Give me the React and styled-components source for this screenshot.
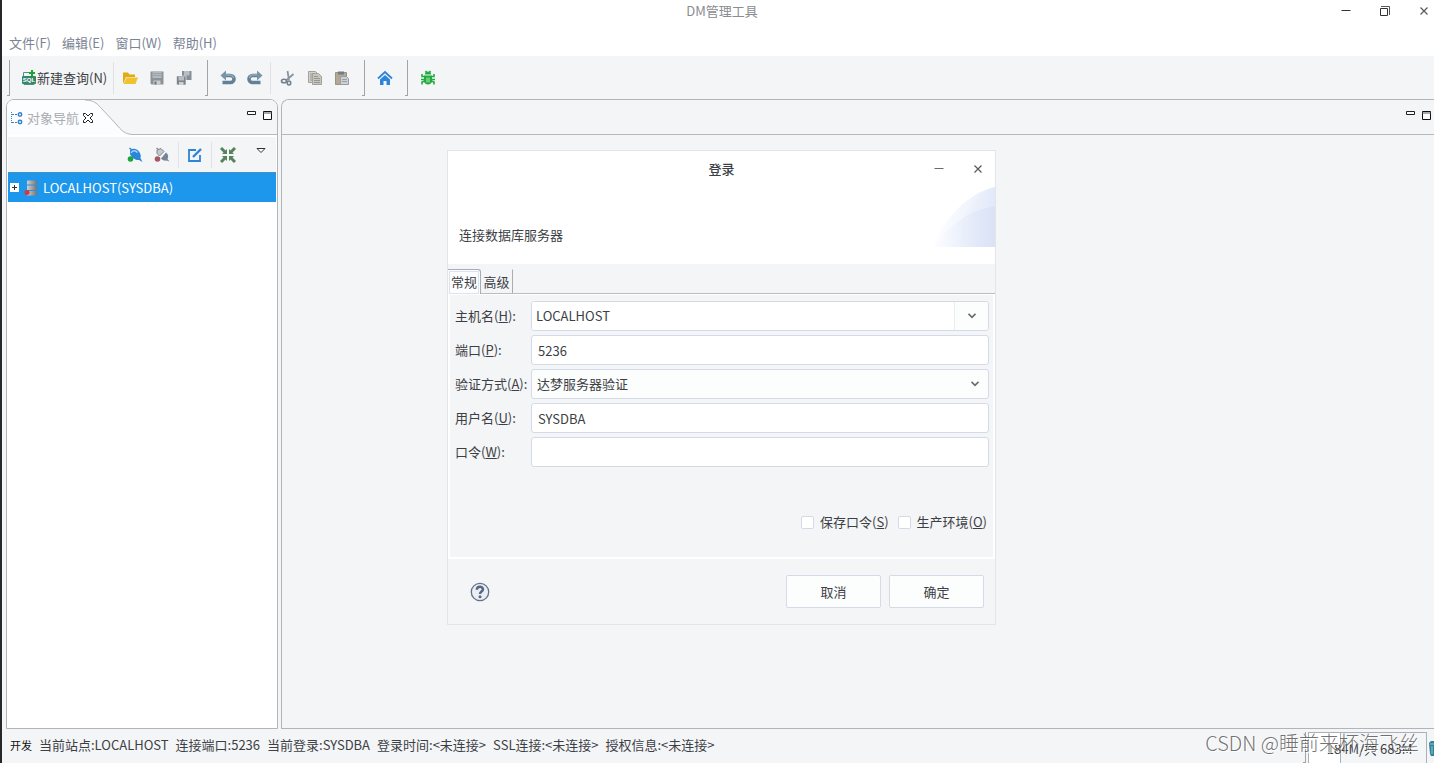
import React from "react";
import styled, { createGlobalStyle } from "styled-components";

const GlobalStyle = createGlobalStyle`
  * {
    box-sizing: border-box;
  }
  body {
    margin: 0;
    background: #f4f5f7;
    color: #3c3f45;
    font-family: "Noto Sans CJK SC", sans-serif;
    font-size: 13px;
    line-height: 20px;
  }
  button, input, select {
    font: inherit;
    color: inherit;
    margin: 0;
  }
  button {
    padding: 0;
    border: none;
    background: none;
  }
  svg {
    display: block;
    flex: none;
  }
`;

const Window = styled.div`
  position: relative;
  display: flex;
  flex-direction: column;
  height: 100vh;
  min-height: 700px;
  border-left: 2px solid #26272b;
  overflow: hidden;
`;

const TitleBar = styled.header`
  position: relative;
  display: flex;
  justify-content: center;
  height: 33px;
  padding: 1px 0 0 8px;
  background: #fff;
  color: #8a8c90;
`;

const WindowTitle = styled.h1`
  margin: 0;
  font-size: 13px;
  font-weight: 400;
`;

const WindowButtons = styled.div`
  position: absolute;
  top: 4px;
  right: 3px;
  display: flex;
  gap: 25px;
`;

const IconButton = styled.button`
  display: flex;
  align-items: center;
  justify-content: center;
  width: ${(p) => p.$size || 14}px;
  height: ${(p) => p.$size || 14}px;
`;

const MenuBar = styled.nav`
  display: flex;
  gap: 11px;
  height: 23px;
  padding-left: 7px;
  background: #fff;
`;

const MenuItem = styled.button`
  height: 20px;
  color: #7b8494;
`;

const Toolbar = styled.div`
  display: flex;
  align-items: center;
  height: 43px;
  padding-left: 5px;
`;

const ToolGroup = styled.div`
  display: flex;
  align-items: center;
  gap: 11px;
  padding: 0 ${(p) => p.$end || 0}px 0 ${(p) => p.$start || 0}px;
`;

const Grip = styled.span`
  width: 3px;
  height: 36px;
  border-right: 1px solid #9fa4aa;
  border-bottom: 1px solid #9fa4aa;
`;

const Divider = styled.span`
  width: 1px;
  height: ${(p) => p.$height || 32}px;
  background: #e0e2e5;
`;

const QueryButton = styled.button`
  display: flex;
  align-items: center;
  height: 24px;
`;

const Workbench = styled.main`
  flex: 1;
  display: flex;
  gap: 3px;
  min-height: 0;
  padding-left: 4px;
`;

const Navigator = styled.section`
  display: flex;
  flex-direction: column;
  width: 272px;
  border: 1px solid #b0b5bb;
  border-radius: 8px 8px 0 0;
  background: #fff;
`;

const Editor = styled.section`
  flex: 1;
  border: 1px solid #b0b5bb;
  border-right: none;
  border-radius: 8px 0 0 0;
`;

const PanelHead = styled.div`
  display: flex;
  height: 35px;
  border-radius: 7px 7px 0 0;
  background: #f4f5f7;
`;

const PanelTab = styled.div`
  display: flex;
  align-items: center;
  gap: 3px;
  padding-left: 4px;
  border-top-left-radius: 7px;
  background: #fcfdfe;
  color: #a9acb1;
`;

/* the curve runs under the close button */
const TabClose = styled(IconButton)`
  position: relative;
  z-index: 1;
`;

const Curve = styled.svg`
  margin-left: -9px;
`;

const PanelControls = styled.div`
  flex: 1;
  display: flex;
  justify-content: flex-end;
  gap: 2px;
  padding: 9px ${(p) => p.$end}px 0 0;
  border-bottom: 1px solid #b4b9be;
`;

const NavTools = styled.div`
  display: flex;
  align-items: center;
  justify-content: flex-end;
  gap: 8px;
  height: 35px;
  margin: 2px 1px 0;
  padding-right: 7px;
  background: #f4f5f7;
`;

const NavPair = styled.div`
  display: flex;
  gap: 11px;
`;

const ViewMenu = styled(IconButton)`
  margin-left: 9px;
`;

const TreeRow = styled.div`
  display: flex;
  align-items: center;
  gap: 5px;
  height: 30px;
  margin: 0 1px;
  padding-left: 2px;
  border-top: 1px solid #4a8fc4;
  background: #1c97ec;
  color: #fff;
`;

const Expander = styled.button`
  width: 9px;
  height: 9px;
  background: #fff;
`;

const StatusBar = styled.footer`
  display: flex;
  align-items: center;
  gap: 7px;
  height: 34px;
  padding: 0 0 3px 8px;
`;

const Mode = styled.span`
  font-size: 11px;
  color: #111;
`;

const Heap = styled.div`
  align-self: stretch;
  display: flex;
  gap: 2px;
  margin: 3px 0 -3px auto;
`;

const HeapGrip = styled(Grip)`
  height: 31px;
`;

const HeapMeter = styled.div`
  width: 119px;
  padding: 6px 0 0 4px;
  border: 1px solid #a9b0b9;
  border-bottom: none;
  background: linear-gradient(to right, #fff 31px, #a9b0b9 31px, #a9b0b9 32px, transparent 32px);
  text-align: center;
`;

const Watermark = styled.div`
  position: absolute;
  right: 15px;
  bottom: 5px;
  font-size: 20px;
  font-weight: 300;
  line-height: 30px;
  color: rgba(70, 70, 70, 0.75);
  text-shadow: 1px 1px 0 #fff;
  pointer-events: none;
`;

const Overlay = styled.div`
  position: absolute;
  inset: 0;
  display: flex;
  justify-content: center;
  align-items: flex-start;
  padding: 150px 0 0 7px;
  pointer-events: none;
`;

const Dialog = styled.form`
  width: 549px;
  border: 1px solid #e4e5e7;
  background: #f4f5f7;
  pointer-events: auto;
`;

const DialogHead = styled.div`
  position: relative;
  height: 113px;
  background: #fff;
`;

const DialogTitle = styled.h2`
  margin: 0;
  padding-top: 8px;
  font-size: 13px;
  font-weight: 500;
  text-align: center;
`;

const DialogMessage = styled.p`
  margin: 0;
  padding: 46px 0 0 11px;
`;

const DialogButtons = styled.div`
  position: absolute;
  top: 11px;
  right: 10px;
  display: flex;
  gap: 25px;
`;

const Banner = styled.svg`
  position: absolute;
  top: 36px;
  right: 0;
`;

const Tabs = styled.div`
  display: flex;
  height: 30px;
  padding-top: 5px;
  border-bottom: 1px solid #b9bec6;
`;

const Tab = styled.button`
  width: ${(p) => (p.$active ? 33 : 32)}px;
  height: ${(p) => (p.$active ? 25 : 24)}px;
  padding: 1px 2px 0;
  border-right: 1px solid #a8adb5;
  border-top: 1px solid ${(p) => (p.$active ? "#a8adb5" : "transparent")};
  border-top-right-radius: ${(p) => (p.$active ? 3 : 0)}px;
  background: ${(p) => (p.$active ? "#fcfdfe" : "transparent")};
  white-space: nowrap;

  span {
    display: block;
    height: 21px;
    outline: ${(p) => (p.$active ? "1px solid #dde2ee" : "none")};
  }
`;

const TabBody = styled.div`
  height: 265px;
  padding: 6px 4px 0 5px;
  border: 2px solid #fff;
  border-top-width: 1px;
`;

const Fields = styled.div`
  display: grid;
  grid-template-columns: 76px 1fr;
  row-gap: 4px;
  align-items: center;
`;

const Field = styled.input`
  width: 100%;
  height: 30px;
  padding: 0 6px;
  border: 1px solid #d5dae8;
  border-radius: 3px;
  background: #fff;
  outline: none;
`;

const Combo = styled.div`
  display: flex;
  height: 30px;
  border: 1px solid #d5dae8;
  border-radius: 3px;
  background: #fff;
  overflow: hidden;

  input {
    flex: 1;
    padding: 0 4px;
    border: none;
    outline: none;
  }
  button {
    display: flex;
    align-items: center;
    justify-content: center;
    width: 34px;
    border-left: 1px solid #e9ebef;
    background: #fcfdfd;
  }
`;

const SelectBox = styled.div`
  display: grid;
  align-items: center;

  select, svg {
    grid-area: 1 / 1;
  }
  select {
    width: 100%;
    height: 30px;
    padding: 0 5px;
    border: 1px solid #d5dae8;
    border-radius: 3px;
    appearance: none;
    background: #fcfdfd;
    outline: none;
  }
  svg {
    justify-self: end;
    margin-right: 10px;
    pointer-events: none;
  }
`;

const Checks = styled.div`
  display: flex;
  justify-content: flex-end;
  gap: 9px;
  padding: 45px 2px 0 0;
`;

const Check = styled.label`
  display: flex;
  align-items: center;
  gap: 6px;

  input {
    appearance: none;
    width: 13px;
    height: 13px;
    border: 1px solid #d5dae8;
    border-radius: 2px;
    background: #fff;
  }
`;

const DialogFoot = styled.div`
  display: flex;
  align-items: center;
  gap: 8px;
  height: 65px;
  padding: 0 11px 0 22px;
`;

const HelpButton = styled(IconButton)`
  margin-right: auto;
`;

const PushButton = styled.button`
  width: 95px;
  height: 33px;
  border: 1px solid #d5dae8;
  border-radius: 2px;
  background: #fcfdfd;
`;

const CloseIcon = () => (
  <svg width="10" height="10" viewBox="0 0 10 10" stroke="#55585d" strokeWidth="1.2">
    <path d="M1.5 1.5l7 7M8.5 1.5l-7 7" />
  </svg>
);

const MinusIcon = ({ color = "#333" }) => (
  <svg width="10" height="10" viewBox="0 0 10 10">
    <path d="M0.5 4.5h9" stroke={color} strokeWidth="1" />
  </svg>
);

const RestoreIcon = () => (
  <svg width="10" height="10" viewBox="0 0 10 10" fill="none" stroke="#55585d">
    <path d="M0.5 2.5h7v7h-7z" stroke="#333" />
    <path d="M1 0.5h8.500v8.500" />
  </svg>
);

const PanelMin = () => (
  <svg width="10" height="10" viewBox="0 0 10 10">
    <path d="M0.5 0.5h8v3h-8z" fill="#fff" stroke="#222" />
  </svg>
);

const PanelMax = () => (
  <svg width="10" height="10" viewBox="0 0 10 10">
    <path d="M0.5 0.5h8v8h-8z" fill="#fff" stroke="#111" />
    <path d="M0 2h9" stroke="#555" />
  </svg>
);

const SqlIcon = () => (
  <svg width="16" height="16" viewBox="0 0 16 16">
    <path d="M2.5 8V2.5h6M13 9v5.5H3V13" fill="none" stroke="#4d9580" />
    <rect x="1" y="6" width="14" height="8" rx="1" fill="#35866d" />
    <path d="M8 3h6M11 0v6" stroke="#15a92c" strokeWidth="2" />
    <text x="8" y="12" textAnchor="middle" fontSize="6" fontWeight="700" fontFamily="Liberation Sans, sans-serif" fill="#fff">SQL</text>
  </svg>
);

const FolderIcon = () => (
  <svg width="16" height="16" viewBox="0 0 16 16">
    <path d="M1 13V2.5h5l1.5 2H13V7H4L1.5 13z" fill="#e0ac13" />
    <path d="M4.5 7.5H16L13.5 14H1.5z" fill="#f0c22e" />
  </svg>
);

const SaveIcon = () => (
  <svg width="16" height="16" viewBox="0 0 16 16">
    <path d="M1.500 1.500h13v13h-12l-1-1z" fill="#8b9298" />
    <path d="M3.500 1.500h9V8h-9z" fill="#b4bac0" />
    <path d="M4 3.500h8M4 5.500h8" stroke="#9ba2a8" />
    <path d="M4.500 10.500h7v4h-7z" fill="#c8cdd1" />
    <path d="M5.500 11.500h2v3h-2z" fill="#6d757c" />
  </svg>
);

const SaveAllIcon = () => (
  <svg width="16" height="16" viewBox="0 0 16 16">
    <path d="M6 1h9.500v9H6z" fill="#868e95" />
    <path d="M8 1h5.500v4.500H8z" fill="#b8bec4" />
    <path d="M0.500 6h9.500v9H1.500l-1-1z" fill="#7c848b" stroke="#f4f5f7" strokeWidth="0.600" />
    <path d="M2.500 6.500H8V10.500H2.500z" fill="#b8bec4" />
    <path d="M3 12h4.500v3H3z" fill="#cdd1d5" />
  </svg>
);

const UndoIcon = ({ flip }) => (
  <svg width="16" height="16" viewBox="0 0 16 16">
    <g transform={flip ? "matrix(-1 0 0 1 16 0)" : undefined}>
      <path d="M4 5.500h6.500a3.500 3.500 0 0 1 0 7H2.500" fill="none" stroke="#638196" strokeWidth="3.600" />
      <path d="M4 5h6.500a3.500 3.500 0 0 1 3 3" fill="none" stroke="#91aaba" strokeWidth="1.600" />
      <path d="M0.500 5.500L6 0.500v10z" fill="#7894a6" />
    </g>
  </svg>
);

const CutIcon = () => (
  <svg width="16" height="16" viewBox="0 0 16 16" fill="none" stroke="#8995a0">
    <path d="M7.500 1l1.500 9M13.500 4L6 10.500" strokeWidth="1.800" />
    <ellipse cx="4" cy="11" rx="2.500" ry="1.800" strokeWidth="1.600" stroke="#71808c" />
    <ellipse cx="9" cy="13" rx="1.700" ry="2" strokeWidth="1.600" stroke="#71808c" />
  </svg>
);

const CopyIcon = () => (
  <svg width="16" height="16" viewBox="0 0 16 16" stroke="#a3a19a">
    <path d="M1.500 1.500h7l2 2v9h-9z" fill="#d5d2ca" />
    <path d="M5.500 3.500h6l3 3v8h-9z" fill="#c9c6bd" />
    <path d="M3 4h3M3 6h2M3 8h2M3 10h2M7 6.500h4M7 8.500h6M7 10.500h6M7 12.500h6" stroke="#92959a" />
  </svg>
);

const PasteIcon = () => (
  <svg width="16" height="16" viewBox="0 0 16 16">
    <path d="M1.500 2.500h11v12h-11z" fill="#b3a896" stroke="#9a9282" />
    <path d="M4 1.500h6v3H4z" fill="#737d86" />
    <path d="M6.500 6.500h6l2 2v6h-8z" fill="#ced1d3" stroke="#989da1" />
    <path d="M8 9.500h5M8 11.500h5" stroke="#9a9fa3" />
  </svg>
);

const HomeIcon = () => (
  <svg width="16" height="16" viewBox="0 0 16 16">
    <path d="M1 8.500l7-6.500 7 6.500" fill="none" stroke="#2e84d8" strokeWidth="1.800" />
    <path d="M3 9.500l5-4.500 5 4.500V15H9.500v-4h-3v4H3z" fill="#2e84d8" />
  </svg>
);

const BugIcon = () => (
  <svg width="16" height="16" viewBox="0 0 16 16">
    <path d="M5 4.500a3 3 0 0 1 6 0z" fill="#20ac3c" />
    <path d="M4 5.500h8v5.500c0 2-2 3.500-4 3.500s-4-1.500-4-3.500z" fill="#20ac3c" />
    <path d="M2 4v2.500h3M14 4v2.500h-3M1 9.500h14M2 14.500v-2.500l3-1M14 14.500v-2.500l-3-1M5.500 1l1 1.500M10.500 1l-1 1.500" fill="none" stroke="#20ac3c" strokeWidth="1.600" />
    <path d="M7 7.500v5M9 7.500v5" stroke="#dff3e2" strokeWidth="0.800" />
  </svg>
);

const NavIcon = () => (
  <svg width="13" height="16" viewBox="0 0 13 16" fill="none" stroke="#3181cf">
    <path d="M0.500 2v11" strokeDasharray="1 1" />
    <path d="M1 4.500h5M1 12.500h5" strokeDasharray="2 1" />
    <circle cx="9" cy="4.500" r="1.700" strokeWidth="1.500" />
    <circle cx="9" cy="12" r="1.700" strokeWidth="1.500" />
  </svg>
);

const TabCloseIcon = () => (
  <svg width="12" height="12" viewBox="0 0 12 12">
    <path d="M1.500 1.500h2L6 4l2.500-2.500h2v2L8 6l2.500 2.500v2h-2L6 8l-2.500 2.500h-2v-2L4 6 1.500 3.500z" fill="#fff" stroke="#222" />
  </svg>
);

const TabCurve = () => (
  <Curve width="48" height="35" viewBox="0 0 48 35">
    <path d="M0 0C10 0 13 5 17 9L31 24C36 30 40 34.500 48 34.500V35H0z" fill="#fcfdfe" />
    <path d="M0 0C10 0 13 5 17 9L31 24C36 30 40 34.500 48 34.500" fill="none" stroke="#b0b5bb" />
  </Curve>
);

const PlugIcon = ({ off }) => (
  <svg width="16" height="16" viewBox="0 0 16 16">
    <path d="M2.500 1L6 4" stroke={off ? "#8b8f94" : "#2b83d6"} strokeWidth="1.500" />
    {off ? (
      <g>
        <path d="M3 3l4-1.500 3 3L5.500 9 3 6.500z" fill="#c5c9cd" stroke="#80868d" />
        <path d="M12 5.500c2 1.500 3 4 1.500 6.500l2 2.500-3-1c-2 .5-4.500-.5-5.500-2z" fill="#758596" />
      </g>
    ) : (
      <path d="M3 3.500C5 1 9.500 1 12 4.500c2 3 2 5 1.500 6.500l2 4-3.500-2C9 13.500 4.500 11 3 7z" fill="#2b86da" />
    )}
    {!off && <path d="M4 6c1.500-3 4.500-3 6.500-.5" fill="none" stroke="#a5d1f5" strokeWidth="1.400" />}
    <circle cx="3.500" cy="12" r="2.800" fill={off ? "#a05a64" : "#18a83a"} />
  </svg>
);

const EditIcon = () => (
  <svg width="16" height="16" viewBox="0 0 16 16" fill="none" stroke="#2e84d8" strokeWidth="1.800">
    <path d="M9 3H2v11h11V8" />
    <path d="M6 10l8-8" strokeWidth="2.400" />
  </svg>
);

const CollapseIcon = () => (
  <svg width="16" height="16" viewBox="0 0 16 16" fill="#57835c" stroke="#57835c">
    <path d="M1 1l4 4M15 1l-4 4M1 15l4-4M15 15l-4-4" strokeWidth="3" />
    <path d="M7 2v5H2zM9 2v5h5zM7 14V9H2zM9 14V9h5z" stroke="none" />
  </svg>
);

const MenuArrow = () => (
  <svg width="10" height="16" viewBox="0 0 10 16">
    <path d="M1 1.500h8L5 5.500z" fill="#fff" stroke="#333" />
  </svg>
);

const ServerIcon = () => (
  <svg width="14" height="16" viewBox="0 0 14 16">
    <defs>
      <linearGradient id="metal">
        <stop offset="0" stopColor="#d4d0cd" />
        <stop offset="1" stopColor="#77716f" />
      </linearGradient>
    </defs>
    <path d="M3 0.500h10v4H3zM3 5.500h10v4.500H3zM3 11h10v4.500H3z" fill="url(#metal)" />
    <circle cx="3" cy="12.500" r="2.500" fill="#d7353f" />
  </svg>
);

const Chevron = () => (
  <svg width="8" height="6" viewBox="0 0 8 6">
    <path d="M0.500 0.800L4 4.300 7.500 0.800" fill="none" stroke="#686c73" strokeWidth="1.700" />
  </svg>
);

const HelpIcon = () => (
  <svg width="20" height="20" viewBox="0 0 20 20">
    <circle cx="10" cy="10" r="8.700" fill="#eceef1" stroke="#63718b" strokeWidth="1.300" />
    <path d="M6.800 7.800C7 3.800 13 4 13 7.300c0 2.300-3 2.300-3 4.700" fill="none" stroke="#566785" strokeWidth="2.500" />
    <circle cx="10" cy="14.700" r="1.500" fill="#566785" />
  </svg>
);

const TrashIcon = () => (
  <svg width="5" height="28" viewBox="0 -8 5 28">
    <path d="M0 3l2-2h3v15H2L1 14z" fill="#347f9e" />
    <path d="M1 4h4M3 6v8" stroke="#8fd0c2" />
  </svg>
);

const menus = ["文件(F)", "编辑(E)", "窗口(W)", "帮助(H)"];

const status = [
  "当前站点:LOCALHOST",
  "连接端口:5236",
  "当前登录:SYSDBA",
  "登录时间:<未连接>",
  "SSL连接:<未连接>",
  "授权信息:<未连接>",
];

const Tool = ({ label, children }) => (
  <IconButton type="button" $size={16} aria-label={label}>
    {children}
  </IconButton>
);

const LoginDialog = () => (
  <Dialog onSubmit={(e) => e.preventDefault()}>
    <DialogHead>
      <DialogTitle>登录</DialogTitle>
      <DialogButtons>
        <IconButton type="button" aria-label="最小化"><MinusIcon color="#686b70" /></IconButton>
        <IconButton type="button" aria-label="关闭"><CloseIcon /></IconButton>
      </DialogButtons>
      <DialogMessage>连接数据库服务器</DialogMessage>
      <Banner width="66" height="60" viewBox="0 0 66 60">
        <defs>
          <linearGradient id="outer">
            <stop offset="0" stopColor="#fff" />
            <stop offset="1" stopColor="#e6edfa" />
          </linearGradient>
          <linearGradient id="inner">
            <stop offset="0" stopColor="#e9f0fb" stopOpacity="0" />
            <stop offset="1" stopColor="#dbe2f6" />
          </linearGradient>
        </defs>
        <path d="M2 60C16 32 38 6 66 0v60z" fill="url(#outer)" />
        <path d="M22 60C30 30 48 5 66 0v60z" fill="url(#inner)" opacity="0.4" />
        <path d="M4 60C20 38 40 23 66 19v41z" fill="url(#inner)" />
      </Banner>
    </DialogHead>
    <Tabs role="tablist">
      <Tab type="button" role="tab" aria-selected="true" $active><span>常规</span></Tab>
      <Tab type="button" role="tab" aria-selected="false"><span>高级</span></Tab>
    </Tabs>
    <TabBody>
      <Fields>
        <label htmlFor="host">主机名(<u>H</u>):</label>
        <Combo>
          <input id="host" defaultValue="LOCALHOST" />
          <button type="button" aria-label="主机列表"><Chevron /></button>
        </Combo>
        <label htmlFor="port">端口(<u>P</u>):</label>
        <Field id="port" defaultValue="5236" />
        <label htmlFor="auth">验证方式(<u>A</u>):</label>
        <SelectBox>
          <select id="auth">
            <option>达梦服务器验证</option>
          </select>
          <Chevron />
        </SelectBox>
        <label htmlFor="user">用户名(<u>U</u>):</label>
        <Field id="user" defaultValue="SYSDBA" />
        <label htmlFor="password">口令(<u>W</u>):</label>
        <Field id="password" type="password" />
      </Fields>
      <Checks>
        <Check><input type="checkbox" /><span>保存口令(<u>S</u>)</span></Check>
        <Check><input type="checkbox" /><span>生产环境(<u>O</u>)</span></Check>
      </Checks>
    </TabBody>
    <DialogFoot>
      <HelpButton type="button" $size={20} aria-label="帮助"><HelpIcon /></HelpButton>
      <PushButton type="button">取消</PushButton>
      <PushButton type="submit">确定</PushButton>
    </DialogFoot>
  </Dialog>
);

export default function App() {
  return (
    <Window>
      <GlobalStyle />
      <TitleBar>
        <WindowTitle>DM管理工具</WindowTitle>
        <WindowButtons>
          <IconButton type="button" aria-label="最小化"><MinusIcon /></IconButton>
          <IconButton type="button" aria-label="还原"><RestoreIcon /></IconButton>
          <IconButton type="button" aria-label="关闭"><CloseIcon /></IconButton>
        </WindowButtons>
      </TitleBar>
      <MenuBar>
        {menus.map((m) => <MenuItem type="button" key={m}>{m}</MenuItem>)}
      </MenuBar>
      <Toolbar>
        <Grip />
        <ToolGroup $start={11} $end={6}>
          <QueryButton type="button"><SqlIcon />新建查询(N)</QueryButton>
        </ToolGroup>
        <Divider />
        <ToolGroup $start={8} $end={13}>
          <Tool label="打开"><FolderIcon /></Tool>
          <Tool label="保存"><SaveIcon /></Tool>
          <Tool label="全部保存"><SaveAllIcon /></Tool>
        </ToolGroup>
        <Grip />
        <ToolGroup $start={12} $end={7}>
          <Tool label="撤销"><UndoIcon /></Tool>
          <Tool label="重做"><UndoIcon flip /></Tool>
        </ToolGroup>
        <Divider />
        <ToolGroup $start={9} $end={12}>
          <Tool label="剪切"><CutIcon /></Tool>
          <Tool label="复制"><CopyIcon /></Tool>
          <Tool label="粘贴"><PasteIcon /></Tool>
        </ToolGroup>
        <Grip />
        <ToolGroup $start={12} $end={12}>
          <Tool label="主页"><HomeIcon /></Tool>
        </ToolGroup>
        <Grip />
        <ToolGroup $start={12}>
          <Tool label="调试"><BugIcon /></Tool>
        </ToolGroup>
      </Toolbar>
      <Workbench>
        <Navigator>
          <PanelHead>
            <PanelTab>
              <NavIcon />
              <span>对象导航</span>
              <TabClose type="button" aria-label="关闭" $size={12}><TabCloseIcon /></TabClose>
            </PanelTab>
            <TabCurve />
            <PanelControls $end={2}>
              <IconButton type="button" aria-label="最小化"><PanelMin /></IconButton>
              <IconButton type="button" aria-label="最大化"><PanelMax /></IconButton>
            </PanelControls>
          </PanelHead>
          <NavTools>
            <NavPair>
              <Tool label="连接"><PlugIcon /></Tool>
              <Tool label="断开"><PlugIcon off /></Tool>
            </NavPair>
            <Divider $height={26} />
            <Tool label="编辑"><EditIcon /></Tool>
            <Divider $height={26} />
            <Tool label="全部折叠"><CollapseIcon /></Tool>
            <ViewMenu type="button" $size={16} aria-label="视图菜单"><MenuArrow /></ViewMenu>
          </NavTools>
          <TreeRow>
            <Expander type="button" aria-label="展开">
              <svg width="9" height="9" viewBox="0 0 9 9">
                <path d="M2 4.500h5M4.500 2v5" stroke="#333" />
              </svg>
            </Expander>
            <ServerIcon />
            <span>LOCALHOST(SYSDBA)</span>
          </TreeRow>
        </Navigator>
        <Editor>
          <PanelHead>
            <PanelControls $end={0}>
              <IconButton type="button" aria-label="最小化"><PanelMin /></IconButton>
              <IconButton type="button" aria-label="最大化"><PanelMax /></IconButton>
            </PanelControls>
          </PanelHead>
        </Editor>
      </Workbench>
      <StatusBar>
        <Mode>开发</Mode>
        {status.map((s) => <span key={s}>{s}</span>)}
        <Heap>
          <HeapGrip />
          <HeapMeter>184M/共 683M</HeapMeter>
          <TrashIcon />
        </Heap>
      </StatusBar>
      <Overlay>
        <LoginDialog />
      </Overlay>
      <Watermark>CSDN @睡前来杯海飞丝</Watermark>
    </Window>
  );
}
